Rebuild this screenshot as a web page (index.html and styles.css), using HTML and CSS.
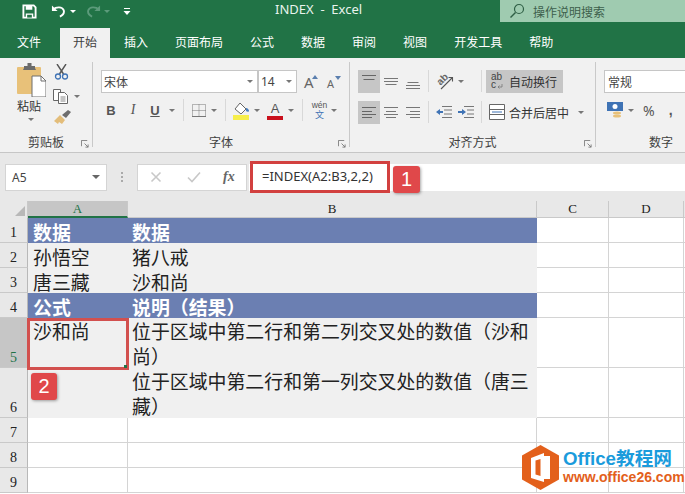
FILE: index.html
```html
<!DOCTYPE html>
<html lang="zh-CN">
<head>
<meta charset="utf-8">
<title>INDEX - Excel</title>
<link rel="stylesheet" href="styles.css">
</head>
<body>
<div class="app">
  <header class="titlebar">
    <div class="qat">
      <svg class="ic save" width="15" height="15" viewBox="0 0 16 16"><path d="M1.500 1.500h11l2 2v11h-13z" fill="none" stroke="#fff" stroke-width="2"/><path d="M4 2h7v4H4zM4 10h8v4H4z" fill="#fff"/><path d="M5.500 11.500h5v3h-5z" fill="#217346"/></svg>
      <svg class="ic undo" width="15" height="14" viewBox="0 0 16 14"><path d="M2 5.500c4-3.500 10-3 11.500.5 1 3-1 5.500-4 7" fill="none" stroke="#fff" stroke-width="2"/><path d="M1 1v6h6z" fill="#fff"/></svg>
      <span class="caret light"></span>
      <svg class="ic redo" width="15" height="14" viewBox="0 0 16 14"><path d="M14 5.500c-4-3.500-10-3-11.500.5-1 3 1 5.500 4 7" fill="none" stroke="#5c9b7b" stroke-width="2"/><path d="M15 1v6H9z" fill="#5c9b7b"/></svg>
      <span class="caret faded"></span>
      <svg class="ic custom" width="8" height="8" viewBox="0 0 8 8"><path d="M1 1h6v1H1zM.500 4h7L4 8z" fill="#fff"/></svg>
    </div>
    <div class="doc-title">INDEX&nbsp; - &nbsp;Excel</div>
    <div class="tell">
      <svg width="16" height="16" viewBox="0 0 16 16"><circle cx="10" cy="6" r="4.500" fill="none" stroke="#2f5f45" stroke-width="1.200"/><path d="M6.500 9.500L1.500 14.500" stroke="#2f5f45" stroke-width="1.400"/></svg>
      <span>操作说明搜索</span>
    </div>
  </header>

  <nav class="tabs">
    <span class="tab first">文件</span>
    <span class="tab active">开始</span>
    <span class="tab">插入</span>
    <span class="tab">页面布局</span>
    <span class="tab">公式</span>
    <span class="tab">数据</span>
    <span class="tab">审阅</span>
    <span class="tab">视图</span>
    <span class="tab">开发工具</span>
    <span class="tab">帮助</span>
  </nav>

  <section class="ribbon">
    <div class="group g-clip">
      <div class="body clip-body">
        <div class="paste">
          <svg width="29" height="34" viewBox="0 0 29 34"><rect x="0" y="4" width="24" height="27" rx="1" fill="#e8c179"/><path d="M7 5V3h3.500V0h4v3H18v2l1 2H6z" fill="#6b6b6b"/><path d="M15 13h9l5 5v16H15z" fill="#fff" stroke="#6f6f6f"/><path d="M24 13v5h5" fill="none" stroke="#6f6f6f"/></svg>
          <span class="paste-label">粘贴</span>
          <span class="caret"></span>
        </div>
        <div class="clip-tools">
          <svg width="15" height="16" viewBox="0 0 15 16"><path d="M3 0l6.500 10M12 0L5.500 10" stroke="#555" stroke-width="1.400" fill="none"/><circle cx="4" cy="12.500" r="2.500" fill="none" stroke="#3f73b5" stroke-width="1.300"/><circle cx="11" cy="12.500" r="2.500" fill="none" stroke="#3f73b5" stroke-width="1.300"/></svg>
          <div class="copy-row">
            <svg width="16" height="15" viewBox="0 0 16 15"><path d="M.5.500h7v11h-7z" fill="#fff" stroke="#666"/><path d="M5.500 3.500h6l3 3v8h-9z" fill="#fff" stroke="#666"/><path d="M7.500 8h5M7.500 10h5M7.500 12h5" stroke="#888"/></svg>
            <span class="caret"></span>
          </div>
          <svg class="brush" width="17" height="15" viewBox="0 0 17 15"><path d="M0 11l6-6 5 5-3 4-3-2-1 2z" fill="#e3bd7a"/><path d="M8 5l6-5 3 2-5 6z" fill="#6d6d6d"/></svg>
        </div>
      </div>
      <div class="label">剪贴板<svg class="launch" width="8" height="8" viewBox="0 0 9 9"><path d="M.500 7V.500H7M4 4l4 4M8 5v3H5" fill="none" stroke="#777"/></svg></div>
    </div>

    <div class="group g-font">
      <div class="body font-body">
        <div class="row font-top">
          <div class="select font-name"><span>宋体</span><span class="caret"></span></div>
          <div class="select font-size"><span>14</span><span class="caret"></span></div>
          <span class="grow big">A<svg class="tri" width="6" height="4" viewBox="0 0 6 4"><path d="M0 4h6L3 0z" fill="#5b7fae"/></svg></span>
          <span class="grow small">A<svg class="tri" width="6" height="4" viewBox="0 0 6 4"><path d="M0 0h6L3 4z" fill="#5b7fae"/></svg></span>
        </div>
        <div class="row font-bottom">
          <span class="fmt bold">B</span>
          <span class="fmt italic">I</span>
          <span class="fmt under">U</span>
          <span class="caret c-under"></span>
          <i class="sep"></i>
          <svg class="border-ic" width="14" height="13" viewBox="0 0 14 13"><path d="M.5.500h13v12H.5zM7 .5v12M.5 6.500h13" fill="none" stroke="#777" stroke-dasharray="1 1"/><path d="M0 12.500h14" stroke="#777"/></svg>
          <span class="caret c-border"></span>
          <i class="sep"></i>
          <svg class="fill-ic" width="17" height="19" viewBox="0 0 17 19"><path d="M2 8l5-6 6 6-5 5z" fill="#fff" stroke="#666"/><path d="M13 7c2 0 3 2 3 3s-2 1-3 0z" fill="#4a7fc0"/><rect x="0" y="14" width="16" height="5" fill="#f6ee4a"/></svg>
          <span class="caret c-fill"></span>
          <span class="color-a">A</span>
          <span class="caret c-color"></span>
          <i class="sep"></i>
          <span class="phon"><span class="wen">wén</span><span class="wen-zh">文</span></span>
          <span class="caret c-phon"></span>
        </div>
      </div>
      <div class="label">字体<svg class="launch" width="8" height="8" viewBox="0 0 9 9"><path d="M.500 7V.500H7M4 4l4 4M8 5v3H5" fill="none" stroke="#777"/></svg></div>
    </div>

    <div class="group g-align">
      <div class="body align-body">
        <div class="row align-row">
          <span class="abtn on"><svg width="14" height="22" viewBox="0 0 14 22"><path d="M0 5.500h14M1.500 9.500h11" stroke="#666"/></svg></span>
          <span class="abtn"><svg width="14" height="22" viewBox="0 0 14 22"><path d="M0 8.500h14M0 11.500h14M1.500 14.500h11" stroke="#777"/></svg></span>
          <span class="abtn"><svg width="14" height="22" viewBox="0 0 14 22"><path d="M1.500 12.500h11M0 15.500h14M0 18.500h14" stroke="#777"/></svg></span>
          <i class="sep"></i>
          <span class="orient"><svg class="orient-ic" width="18" height="18" viewBox="0 0 18 18"><text class="orient-text" x="1" y="11" transform="rotate(-45 6 8)">ab</text><path d="M5 17L16 6M12.500 5.500H16.500V9.500" fill="none" stroke="#555" stroke-width="1.100"/></svg><span class="caret"></span></span>
          <i class="sep"></i>
          <span class="wrap on"><span class="wrap-ic">abc<svg class="wrap-arrow" width="6" height="6" viewBox="0 0 6 6"><path d="M5 1v3H1M2.500 2.500L1 4l1.500 1.500" fill="none" stroke="#777" stroke-width=".8"/></svg></span>自动换行</span>
        </div>
        <div class="row align-row second">
          <span class="abtn on"><svg width="14" height="22" viewBox="0 0 14 22"><path d="M0 6.500h14M0 10.500h10M0 13.500h14M0 16.500h10" stroke="#666"/></svg></span>
          <span class="abtn"><svg width="14" height="22" viewBox="0 0 14 22"><path d="M0 6.500h14M2 10.500h10M0 13.500h14M2 16.500h10" stroke="#777"/></svg></span>
          <span class="abtn"><svg width="14" height="22" viewBox="0 0 14 22"><path d="M0 6.500h14M4 10.500h10M0 13.500h14M4 16.500h10" stroke="#777"/></svg></span>
          <i class="sep"></i>
          <span class="indents">
            <svg width="16" height="12" viewBox="0 0 16 12"><path d="M6 .5h10M8 4h8M8 8h8M6 11.500h10" stroke="#777"/><path d="M0 6l4-3v2h3v2H4v2z" fill="#3f73b5"/></svg>
            <svg width="16" height="12" viewBox="0 0 16 12"><path d="M6 .5h10M9 4h7M9 8h7M6 11.500h10" stroke="#777"/><path d="M8 6L4 3v2H0v2h4v2z" fill="#3f73b5"/></svg>
          </span>
          <i class="sep"></i>
          <span class="merge"><svg width="16" height="16" viewBox="0 0 16 16"><path d="M.5.500h15v15H.5zM.5 5.500h15M.5 10.500h15" fill="#fff" stroke="#666"/><path d="M3 8h10" stroke="#3f73b5"/></svg>合并后居中<span class="caret"></span></span>
        </div>
      </div>
      <div class="label">对齐方式<svg class="launch" width="8" height="8" viewBox="0 0 9 9"><path d="M.500 7V.500H7M4 4l4 4M8 5v3H5" fill="none" stroke="#777"/></svg></div>
    </div>

    <div class="group g-num">
      <div class="body num-body">
        <div class="select num-fmt">常规</div>
        <div class="row num-row">
          <svg width="16" height="17" viewBox="0 0 16 17"><rect x="0" y="0" width="16" height="9" fill="#3f73b5"/><circle cx="8" cy="4.500" r="2.500" fill="#fff"/><ellipse cx="10" cy="11" rx="4" ry="1.500" fill="#e8c179"/><ellipse cx="10" cy="14" rx="4" ry="1.500" fill="#e8c179"/></svg>
          <span class="caret"></span>
          <span class="pct">%</span>
          <span class="comma">,</span>
        </div>
      </div>
      <div class="label">数字</div>
    </div>
  </section>

  <section class="formula">
    <div class="namebox"><span>A5</span><span class="caret dark"></span></div>
    <span class="dots"></span>
    <div class="fx-box">
      <svg width="12" height="12" viewBox="0 0 12 12"><path d="M1.500 1.500l9 9M10.500 1.500l-9 9" stroke="#c8c8c8" stroke-width="1.600"/></svg>
      <svg width="14" height="12" viewBox="0 0 14 12"><path d="M1 6.500l4 4 8-9" fill="none" stroke="#c8c8c8" stroke-width="1.600"/></svg>
      <span class="fx">fx</span>
    </div>
    <div class="input">
      <span class="formula-text">=INDEX(A2:B3,2,2)</span>
      <span class="badge">1</span>
    </div>
  </section>

  <section class="sheet">
    <div class="corner"><i></i></div>
    <div class="ch active">A</div>
    <div class="ch">B</div>
    <div class="ch">C</div>
    <div class="ch">D</div>
    <div class="ch"></div>

    <div class="rh">1</div>
    <div class="c head">数据</div><div class="c head">数据</div><div class="c"></div><div class="c"></div><div class="c"></div>
    <div class="rh">2</div>
    <div class="c band">孙悟空</div><div class="c band">猪八戒</div><div class="c"></div><div class="c"></div><div class="c"></div>
    <div class="rh">3</div>
    <div class="c band">唐三藏</div><div class="c band">沙和尚</div><div class="c"></div><div class="c"></div><div class="c"></div>
    <div class="rh">4</div>
    <div class="c head">公式</div><div class="c head">说明（结果）</div><div class="c"></div><div class="c"></div><div class="c"></div>
    <div class="rh active">5</div>
    <div class="c band top">沙和尚</div><div class="c band wraptext">位于区域中第二行和第二列交叉处的数值（沙和尚）</div><div class="c"></div><div class="c"></div><div class="c"></div>
    <div class="rh">6</div>
    <div class="c band"></div><div class="c band wraptext">位于区域中第二行和第一列交叉处的数值（唐三藏）</div><div class="c"></div><div class="c"></div><div class="c"></div>
    <div class="rh">7</div>
    <div class="c"></div><div class="c"></div><div class="c"></div><div class="c"></div><div class="c"></div>
    <div class="rh">8</div>
    <div class="c"></div><div class="c"></div><div class="c"></div><div class="c"></div><div class="c"></div>
    <div class="rh">9</div>
    <div class="c"></div><div class="c"></div><div class="c"></div><div class="c"></div><div class="c"></div>

    <div class="selection"><i></i></div>
    <span class="badge two">2</span>
    <div class="logo">
      <svg width="37" height="45" viewBox="0 0 37 45"><path d="M18.500 0L37 10.500v24L18.500 45 0 34.500v-24z" fill="#e3601b"/><path d="M9 13l13-5v29l-13-4z" fill="#fff"/><path d="M22 11h6v23h-6z" fill="#fff"/><path d="M13.500 15.500l5-1.500v17l-5-1.500z" fill="#e3601b"/></svg>
      <div class="logo-text">
        <span class="logo-main">Office教程网</span>
        <span class="logo-url">www.office26.com</span>
      </div>
    </div>
  </section>
</div>
</body>
</html>
```

FILE: styles.css
```css
* { box-sizing: border-box; }
html, body { margin: 0; padding: 0; height: 100%; overflow: hidden; }
body { font-family: "Noto Sans CJK SC", "Noto Sans", sans-serif; font-size: 12px; color: #444; background: #fff; }
.app { width: 685px; height: 494px; display: flex; flex-direction: column; overflow: hidden; }
svg { display: block; flex: none; }

.caret { display: inline-block; width: 0; height: 0; border-left: 3px solid transparent; border-right: 3px solid transparent; border-top: 3px solid #777; flex: none; }
.caret.light { border-top-color: #fff; }
.caret.faded { border-top-color: #5c9b7b; }
.caret.dark { border-left-width: 4px; border-right-width: 4px; border-top-width: 4px; border-top-color: #666; }

/* title bar */
.titlebar { height: 28px; background: #217346; display: flex; align-items: flex-start; color: #fff; flex: none; }
.qat { display: flex; align-items: center; height: 22px; padding-left: 22px; flex: none; }
.undo { margin-left: 14px; }
.qat .caret.light { margin-left: 4px; }
.redo { margin-left: 10px; }
.qat .caret.faded { margin-left: 3px; }
.custom { margin-left: 13px; }
.doc-title { font-family: "Noto Sans", sans-serif; font-size: 13px; line-height: 19px; margin-left: 144px; color: #e9f3ed; white-space: nowrap; }
.tell { width: 185px; height: 22px; background: #9fcbb0; color: #3d5f4c; display: flex; align-items: center; padding-left: 9px; gap: 8px; flex: none; margin-left: auto; }

/* tabs */
.tabs { height: 30px; background: #217346; display: flex; gap: 1px; padding-left: 4px; flex: none; }
.tab { height: 30px; padding: 0 13px; line-height: 28px; color: #fff; font-size: 12px; }
.tab.first { margin-right: 5px; }
.tab.active { background: #f1f1f1; color: #3f3f3f; }

/* ribbon */
.ribbon { height: 95px; background: #f1f1f1; border-bottom: 1px solid #c6c6c6; display: flex; flex: none; overflow: hidden; }
.group { display: flex; flex-direction: column; border-right: 1px solid #c9c9c9; margin: 4px 0 5px; flex: none; }
.body { height: 70px; flex: none; }
.label { position: relative; text-align: center; line-height: 19px; font-size: 12px; color: #404040; }
.launch { position: absolute; right: 3px; bottom: 3px; }
.row { display: flex; align-items: center; }
.sep { width: 1px; height: 22px; background: #d8d8d8; flex: none; }

.g-clip { width: 93px; }
.clip-body { display: flex; padding: 1px 0 0 17px; }
.paste { width: 37px; display: flex; flex-direction: column; align-items: flex-start; }
.paste-label { font-size: 12px; line-height: 16px; margin-top: 1px; color: #333; }
.paste .caret { margin: 4px 0 0 11px; }
.clip-tools { display: flex; flex-direction: column; gap: 9px; padding-top: 1px; }
.copy-row { display: flex; align-items: center; gap: 5px; margin-left: -1px; }
.brush { margin-top: -3px; }

.g-font { width: 257px; }
.font-body { padding: 8px 0 0 8px; }
.font-top { height: 23px; }
.select { background: #fff; border: 1px solid #c6c6c6; height: 23px; display: flex; align-items: center; justify-content: space-between; padding: 0 4px 0 2px; font-size: 12px; color: #444; }
.font-name { width: 157px; }
.font-size { width: 39px; font-family: "Noto Sans", sans-serif; }
.grow { position: relative; font-family: "Noto Sans", sans-serif; color: #666; }
.grow.big { font-size: 15px; margin-left: 7px; width: 23px; }
.grow.small { font-size: 11px; width: 20px; padding-top: 3px; }
.grow .tri { position: absolute; top: 3px; left: 8px; }
.font-bottom { margin-top: 6px; height: 22px; }
.fmt { font-family: "Liberation Sans", sans-serif; font-size: 13px; color: #555; text-align: center; width: 22px; }
.bold { font-weight: 700; margin-left: -1px; }
.italic { font-family: "Liberation Serif", serif; font-style: italic; font-size: 14px; }
.under { text-decoration: underline; font-weight: 700; }
.c-under { margin-left: 3px; }
.font-bottom .sep { margin: 0 7px 0 8px; }
.border-ic { margin-left: 1px; }
.c-border { margin-left: 5px; }
.c-fill { margin-left: 4px; }
.color-a { font-family: "Liberation Sans", sans-serif; font-size: 13px; line-height: 15px; width: 16px; margin-left: 7px; text-align: center; color: #555; border-bottom: 4px solid #c9101c; }
.c-color { margin-left: 5px; }
.phon { display: flex; flex-direction: column; align-items: center; width: 17px; line-height: 10px; margin-left: 1px; }
.wen { font-family: "Liberation Sans", sans-serif; font-size: 8.500px; color: #555; }
.wen-zh { font-family: "Liberation Sans", "Noto Sans CJK SC", sans-serif; font-size: 9px; color: #3f73b5; }
.c-phon { margin-left: 3px; }

.g-align { width: 246px; }
.align-body { padding: 7px 0 0 8px; }
.align-row { height: 24px; }
.align-row.second { margin-top: 7px; }
.abtn { width: 22px; height: 23px; display: flex; justify-content: center; flex: none; }
.abtn.on { background: #c6c6c6; }
.align-row .sep { margin: 0 7px 0 4px; }
.orient { width: 45px; display: flex; align-items: center; gap: 4px; }
.orient-ic { overflow: visible; }
.orient-text { font-family: "Liberation Sans", sans-serif; font-size: 10px; font-weight: 700; fill: #666; }
.align-row .orient + .sep, .align-row .indents + .sep { margin: 0 4px 0 0; }
.wrap { height: 23px; width: 77px; display: flex; align-items: center; padding-left: 5px; gap: 5px; color: #333; white-space: nowrap; }
.wrap.on { background: #c6c6c6; }
.wrap-ic { position: relative; width: 13px; flex: none; white-space: normal; word-break: break-all; padding-right: 1px; font-family: "Liberation Sans", sans-serif; font-size: 10px; line-height: 8px; color: #444; }
.wrap-arrow { position: absolute; right: 1px; bottom: 0; }
.indents { display: flex; gap: 6px; width: 45px; }
.merge { display: flex; align-items: center; gap: 4px; white-space: nowrap; color: #333; margin-left: 3px; }
.merge .caret { margin-left: 5px; }

.g-num { flex: 1; border-right: 0; padding-left: 8px; width: 90px; }
.num-body { padding-top: 8px; }
.num-fmt { height: 23px; width: 100px; border-right: 0; padding-left: 3px; }
.num-row { height: 22px; margin-top: 6px; padding-left: 3px; }
.num-row .caret { margin-left: 5px; }
.pct { font-family: "Noto Sans", sans-serif; font-size: 14px; margin-left: 9px; color: #555; }
.comma { font-family: "Liberation Sans", sans-serif; font-weight: 700; font-size: 14px; margin-left: 14px; color: #555; }
.g-num .label { text-align: left; padding-left: 45px; }

/* formula bar */
.formula { height: 48px; background: #e8e8e8; display: flex; align-items: center; flex: none; padding-left: 5px; }
.namebox { width: 102px; height: 27px; background: #fff; border: 1px solid #d4d4d4; display: flex; align-items: center; justify-content: space-between; padding: 0 6px; font-family: "Noto Sans", sans-serif; font-size: 12px; color: #444; flex: none; }
.dots { width: 2px; height: 10px; margin: 0 14px; background: repeating-linear-gradient(#aaa 0 2px, transparent 2px 4px); flex: none; }
.fx-box { width: 110px; height: 27px; background: #fff; border: 1px solid #d4d4d4; display: flex; align-items: center; padding-left: 12px; gap: 25px; flex: none; }
.fx { font-family: "Liberation Serif", serif; font-style: italic; font-weight: 700; font-size: 14px; color: #666; margin-left: -3px; }
.input { flex: 1; height: 27px; background: #fff; margin-left: 2px; position: relative; }
.formula-text { position: absolute; left: 1px; top: -3px; width: 140px; height: 32px; border: 3px solid #d2403f; background: #fff; padding-left: 9px; line-height: 25px; font-family: "Noto Sans", sans-serif; font-size: 13px; color: #333; white-space: nowrap; }
.badge { background: #e0484a; color: #fff; border-radius: 3px; box-shadow: 1px 1px 3px rgba(0,0,0,.35); font-family: "Liberation Sans", sans-serif; font-size: 20px; text-align: center; width: 27px; height: 27px; line-height: 27px; position: absolute; left: 144px; top: 2px; }

/* sheet */
.sheet { flex: 1; display: grid; position: relative; grid-template-columns: 28px 100px 409px 72px 75px 1fr; grid-template-rows: 17px 25px 25px 25px 25px 50px 50px 25px 25px 25px; background: #fff; overflow: hidden; }
.corner { background: #e8e8e8; border-right: 1px solid #c9c9c9; display: flex; justify-content: flex-end; align-items: flex-end; padding: 0 2px 2px 0; }
.corner i { width: 0; height: 0; border-left: 10px solid transparent; border-bottom: 10px solid #b8b8b8; }
.ch { background: #e8e8e8; border-right: 1px solid #c9c9c9; border-bottom: 1px solid #c9c9c9; text-align: center; font-family: "Liberation Serif", serif; font-size: 13px; line-height: 15px; color: #222; }
.ch.active { background: #c6c6c6; color: #217346; border-bottom: 2px solid #217346; }
.rh { background: #e8e8e8; border-right: 1px solid #b8b8b8; border-bottom: 1px solid #c9c9c9; display: flex; align-items: flex-end; justify-content: center; font-family: "Liberation Serif", serif; font-size: 14px; line-height: 18px; color: #222; }
.rh.active { background: #c6c6c6; color: #217346; }
.c { border-right: 1px solid #d4d4d4; border-bottom: 1px solid #d4d4d4; font-family: "Liberation Serif", "Noto Sans CJK SC", serif; font-size: 18.900px; line-height: 25px; padding: 3px 0 0 5px; color: #222; white-space: nowrap; }
.c.head { background: #6b7fb2; color: #fff; font-weight: 700; border-color: #6b7fb2; }
.c.band { background: #f0f0f0; border-color: #f0f0f0; }
.c.head + .c.head, .c.band + .c.band { padding-left: 4px; }
.c.top { line-height: 26px; padding-top: 2px; }
.c.wraptext { white-space: normal; padding: 2px 6px 0 4px; }
.selection { position: absolute; left: 27px; top: 117px; width: 102px; height: 52px; border: 3px solid #d2504e; }
.selection i { position: absolute; right: -1px; bottom: -1px; width: 3px; height: 3px; background: #217346; }
.badge.two { left: 31px; top: 172px; width: 26px; }
.logo { position: absolute; left: 522px; top: 244px; display: flex; gap: 4px; }
.logo-text { display: flex; flex-direction: column; padding-top: 3px; }
.logo-main { font-family: "Liberation Sans", "Noto Sans CJK SC", sans-serif; font-weight: 700; font-size: 18.700px; line-height: 22px; color: #1a9bdc; white-space: nowrap; }
.logo-url { font-family: "Liberation Sans", sans-serif; font-weight: 700; font-size: 14px; line-height: 15px; color: #e3601b; white-space: nowrap; }
```
